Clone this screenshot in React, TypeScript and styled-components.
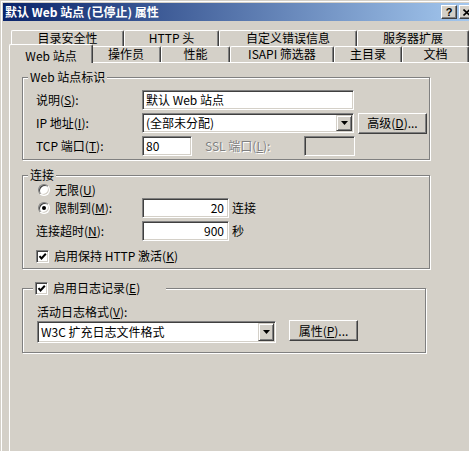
import React from "react";
import styled, { createGlobalStyle } from "styled-components";

const face = "#d4d0c8";
const shadow = "#808080";
const dark = "#404040";

const GlobalStyle = createGlobalStyle`
  html, body {
    margin: 0;
    padding: 0;
    background: ${face};
    overflow: hidden;
  }
  body {
    font-family: "Noto Sans CJK SC", "Noto Sans", sans-serif;
    font-size: 12px;
    line-height: 14px;
    color: #000;
  }
`;

const Window = styled.div`
  width: 480px;
  height: 451px;
  box-sizing: border-box;
  border: 1px solid ${face};
  border-bottom: none;
  box-shadow: inset 1px 1px 0 #fff;
  padding: 2px 2px 0 2px;
  background: ${face};
  overflow: hidden;
`;

const TitleBar = styled.div`
  display: flex;
  align-items: center;
  height: 18px;
  padding-left: 2px;
  background: linear-gradient(to right, #0a246a, #a6caf0);
  color: #fff;
  font-weight: bold;
  font-size: 12px;
`;

const TitleText = styled.span`
  flex: 1;
  white-space: nowrap;
`;

const CaptionButton = styled.div`
  width: 16px;
  height: 14px;
  box-sizing: border-box;
  margin-right: 2px;
  display: flex;
  align-items: center;
  justify-content: center;
  background: ${face};
  border: 1px solid;
  border-color: #fff ${dark} ${dark} #fff;
  box-shadow: inset -1px -1px 0 ${shadow};
  color: #000;
  font-family: "Liberation Sans", sans-serif;
  font-weight: bold;
  font-size: 11px;
`;

const Body = styled.div`
  padding: 9px 0 0 6px;
`;

const TabRow = styled.div`
  display: flex;
  height: 16px;
  padding-left: 2px;
`;

const Tab = styled.div<{ $w: number; $active?: boolean }>`
  position: relative;
  z-index: ${(p) => (p.$active ? 2 : 1)};
  box-sizing: border-box;
  flex: none;
  width: ${(p) => (p.$active ? p.$w + 4 : p.$w)}px;
  height: ${(p) => (p.$active ? 19 : 16)}px;
  margin: ${(p) => (p.$active ? "-2px -2px 0 -2px" : "0")};
  padding: ${(p) => (p.$active ? "3px 0 0" : "0 0 2px")};
  display: flex;
  align-items: center;
  justify-content: center;
  line-height: 12px;
  background: ${face};
  border-top: 1px solid #fff;
  border-left: 1px solid #fff;
  border-right: 1px solid ${dark};
  box-shadow: inset -1px 0 0 ${shadow};
  border-radius: 2px 2px 0 0;
  white-space: nowrap;
`;

const Panel = styled.div`
  height: 380px;
  border-top: 1px solid #fff;
  border-left: 1px solid #fff;
  padding: 14px 0 0 12px;
`;

const Group = styled.div<{ $w: number; $h: number; $mb?: number; $pt: number; $pl: number }>`
  position: relative;
  box-sizing: border-box;
  width: ${(p) => p.$w}px;
  height: ${(p) => p.$h}px;
  margin-bottom: ${(p) => p.$mb ?? 0}px;
  padding: ${(p) => p.$pt}px 0 0 ${(p) => p.$pl}px;
  border: 1px solid ${shadow};
  box-shadow: inset 1px 1px 0 #fff, 1px 1px 0 #fff;
`;

const Legend = styled.div<{ $left: number; $pr?: number }>`
  position: absolute;
  top: -8px;
  left: ${(p) => p.$left}px;
  display: flex;
  align-items: center;
  gap: 5px;
  height: 14px;
  padding: 0 ${(p) => p.$pr ?? 2}px 0 2px;
  background: ${face};
  white-space: nowrap;
`;

const Row = styled.div<{ $h?: number; $mb?: number; $mt?: number }>`
  display: flex;
  align-items: center;
  height: ${(p) => p.$h ?? 20}px;
  margin-top: ${(p) => p.$mt ?? 0}px;
  margin-bottom: ${(p) => p.$mb ?? 0}px;
  white-space: nowrap;
`;

const Label = styled.span<{ $w?: number; $ml?: number; $disabled?: boolean }>`
  display: inline-flex;
  align-items: center;
  gap: 5px;
  flex: none;
  width: ${(p) => (p.$w ? `${p.$w}px` : "auto")};
  margin-left: ${(p) => p.$ml ?? 0}px;
  color: ${(p) => (p.$disabled ? shadow : "#000")};
  text-shadow: ${(p) => (p.$disabled ? "1px 1px 0 #fff" : "none")};
`;

const Field = styled.div<{ $w: number; $h?: number; $mt?: number; $disabled?: boolean; $right?: boolean }>`
  box-sizing: border-box;
  flex: none;
  display: flex;
  align-items: center;
  justify-content: ${(p) => (p.$right ? "flex-end" : "flex-start")};
  width: ${(p) => p.$w}px;
  height: ${(p) => p.$h ?? 20}px;
  margin-top: ${(p) => p.$mt ?? 0}px;
  padding: 0 ${(p) => (p.$right ? 4 : 0)}px 0 3px;
  background: ${(p) => (p.$disabled ? face : "#fff")};
  border: 1px solid;
  border-color: ${shadow} #fff #fff ${shadow};
  box-shadow: inset 1px 1px 0 ${dark}, inset -1px -1px 0 ${face};
  overflow: hidden;
`;

const FieldText = styled.span`
  flex: 1;
  white-space: nowrap;
`;

const DropButton = styled.div`
  box-sizing: border-box;
  flex: none;
  width: 16px;
  height: calc(100% - 2px);
  margin-right: 1px;
  display: flex;
  align-items: center;
  justify-content: center;
  background: ${face};
  border: 1px solid;
  border-color: ${face} ${dark} ${dark} ${face};
  box-shadow: inset 1px 1px 0 #fff, inset -1px -1px 0 ${shadow};
`;

const PushButton = styled.div<{ $w: number; $ml: number; $mt?: number }>`
  box-sizing: border-box;
  flex: none;
  width: ${(p) => p.$w}px;
  height: 21px;
  margin-left: ${(p) => p.$ml}px;
  margin-top: ${(p) => p.$mt ?? 0}px;
  display: flex;
  align-items: center;
  justify-content: center;
  background: ${face};
  border: 1px solid;
  border-color: #fff ${dark} ${dark} #fff;
  box-shadow: inset -1px -1px 0 ${shadow};
  white-space: nowrap;
`;

const Radio = styled.span<{ $checked?: boolean }>`
  position: relative;
  box-sizing: border-box;
  flex: none;
  width: 12px;
  height: 12px;
  margin-left: 2px;
  border-radius: 50%;
  background: #fff;
  border: 1px solid;
  border-color: ${shadow} #fff #fff ${shadow};
  box-shadow: inset 1px 1px 0 ${dark}, inset -1px -1px 0 ${face};
  &::after {
    content: "";
    display: ${(p) => (p.$checked ? "block" : "none")};
    position: absolute;
    left: 3px;
    top: 3px;
    width: 4px;
    height: 4px;
    border-radius: 50%;
    background: #000;
  }
`;

const CheckBox = styled.span`
  box-sizing: border-box;
  flex: none;
  width: 13px;
  height: 13px;
  display: flex;
  align-items: center;
  justify-content: center;
  background: #fff;
  border: 1px solid;
  border-color: ${shadow} #fff #fff ${shadow};
  box-shadow: inset 1px 1px 0 ${dark}, inset -1px -1px 0 ${face};
`;

const Arrow = () => (
  <svg width="7" height="4" viewBox="0 0 7 4">
    <polygon points="0,0 7,0 3.5,4" fill="#000" />
  </svg>
);

const Check = () => (
  <svg width="9" height="9" viewBox="0 0 9 9">
    <path d="M1.5 4.2 L3.5 6.4 L7.8 1.8" stroke="#000" strokeWidth="2" fill="none" />
  </svg>
);

const Close = () => (
  <svg width="8" height="7" viewBox="0 0 8 7">
    <path d="M0.5 0.5 L7 6.5 M7 0.5 L0.5 6.5" stroke="#000" strokeWidth="1.6" />
  </svg>
);

const backTabs = [
  { label: "目录安全性", w: 113 },
  { label: "HTTP 头", w: 95 },
  { label: "自定义错误信息", w: 138 },
  { label: "服务器扩展", w: 112 },
];

const frontTabs = [
  { label: "Web 站点", w: 80 },
  { label: "操作员", w: 70 },
  { label: "性能", w: 69 },
  { label: "ISAPI 筛选器", w: 104 },
  { label: "主目录", w: 68 },
  { label: "文档", w: 67 },
];

export default function App() {
  return (
    <>
      <GlobalStyle />
      <Window>
        <TitleBar>
          <TitleText>默认 Web 站点 (已停止) 属性</TitleText>
          <CaptionButton>?</CaptionButton>
          <CaptionButton>
            <Close />
          </CaptionButton>
        </TitleBar>
        <Body>
          <TabRow>
            {backTabs.map((t) => (
              <Tab key={t.label} $w={t.w}>
                {t.label}
              </Tab>
            ))}
          </TabRow>
          <TabRow>
            {frontTabs.map((t, i) => (
              <Tab key={t.label} $w={t.w} $active={i === 0}>
                {t.label}
              </Tab>
            ))}
          </TabRow>
          <Panel>
            <Group $w={408} $h={83} $mb={15} $pt={12} $pl={13}>
              <Legend $left={5}>Web 站点标识</Legend>
              <Row $mb={3}>
                <Label $w={106}>
                  <span>
                    说明(<u>S</u>):
                  </span>
                </Label>
                <Field $w={212}>
                  <FieldText>默认 Web 站点</FieldText>
                </Field>
              </Row>
              <Row $mb={3}>
                <Label $w={106}>
                  <span>
                    IP 地址(<u>I</u>):
                  </span>
                </Label>
                <Field $w={212}>
                  <FieldText>(全部未分配)</FieldText>
                  <DropButton>
                    <Arrow />
                  </DropButton>
                </Field>
                <PushButton $w={69} $ml={4}>
                  高级(<u>D</u>)...
                </PushButton>
              </Row>
              <Row>
                <Label $w={106}>
                  <span>
                    TCP 端口(<u>T</u>):
                  </span>
                </Label>
                <Field $w={50}>
                  <FieldText>80</FieldText>
                </Field>
                <Label $w={99} $ml={13} $disabled>
                  <span>
                    SSL 端口(<u>L</u>):
                  </span>
                </Label>
                <Field $w={51} $disabled />
              </Row>
            </Group>

            <Group $w={408} $h={94} $mb={19} $pt={7} $pl={13}>
              <Legend $left={5}>连接</Legend>
              <Row $h={14} $mb={1}>
                <Label>
                  <Radio />
                  <span>
                    无限(<u>U</u>)
                  </span>
                </Label>
              </Row>
              <Row $mb={3}>
                <Label $w={106}>
                  <Radio $checked />
                  <span>
                    限制到(<u>M</u>):
                  </span>
                </Label>
                <Field $w={87} $right>
                  20
                </Field>
                <Label $ml={3}>连接</Label>
              </Row>
              <Row>
                <Label $w={106}>
                  <span>
                    连接超时(<u>N</u>):
                  </span>
                </Label>
                <Field $w={87} $right>
                  900
                </Field>
                <Label $ml={3}>秒</Label>
              </Row>
              <Row $h={14} $mt={8}>
                <Label>
                  <CheckBox>
                    <Check />
                  </CheckBox>
                  <span>
                    启用保持 HTTP 激活(<u>K</u>)
                  </span>
                </Label>
              </Row>
            </Group>

            <Group $w={404} $h={65} $pt={16} $pl={14}>
              <Legend $left={10} $pr={26}>
                <CheckBox>
                  <Check />
                </CheckBox>
                <span>
                  启用日志记录(<u>E</u>)
                </span>
              </Legend>
              <Row $h={14} $mb={1}>
                <Label>
                  <span>
                    活动日志格式(<u>V</u>):
                  </span>
                </Label>
              </Row>
              <Row $h={22}>
                <Field $w={239} $h={22} $mt={2}>
                  <FieldText>W3C 扩充日志文件格式</FieldText>
                  <DropButton>
                    <Arrow />
                  </DropButton>
                </Field>
                <PushButton $w={69} $ml={13} $mt={-1}>
                  属性(<u>P</u>)...
                </PushButton>
              </Row>
            </Group>
          </Panel>
        </Body>
      </Window>
    </>
  );
}
